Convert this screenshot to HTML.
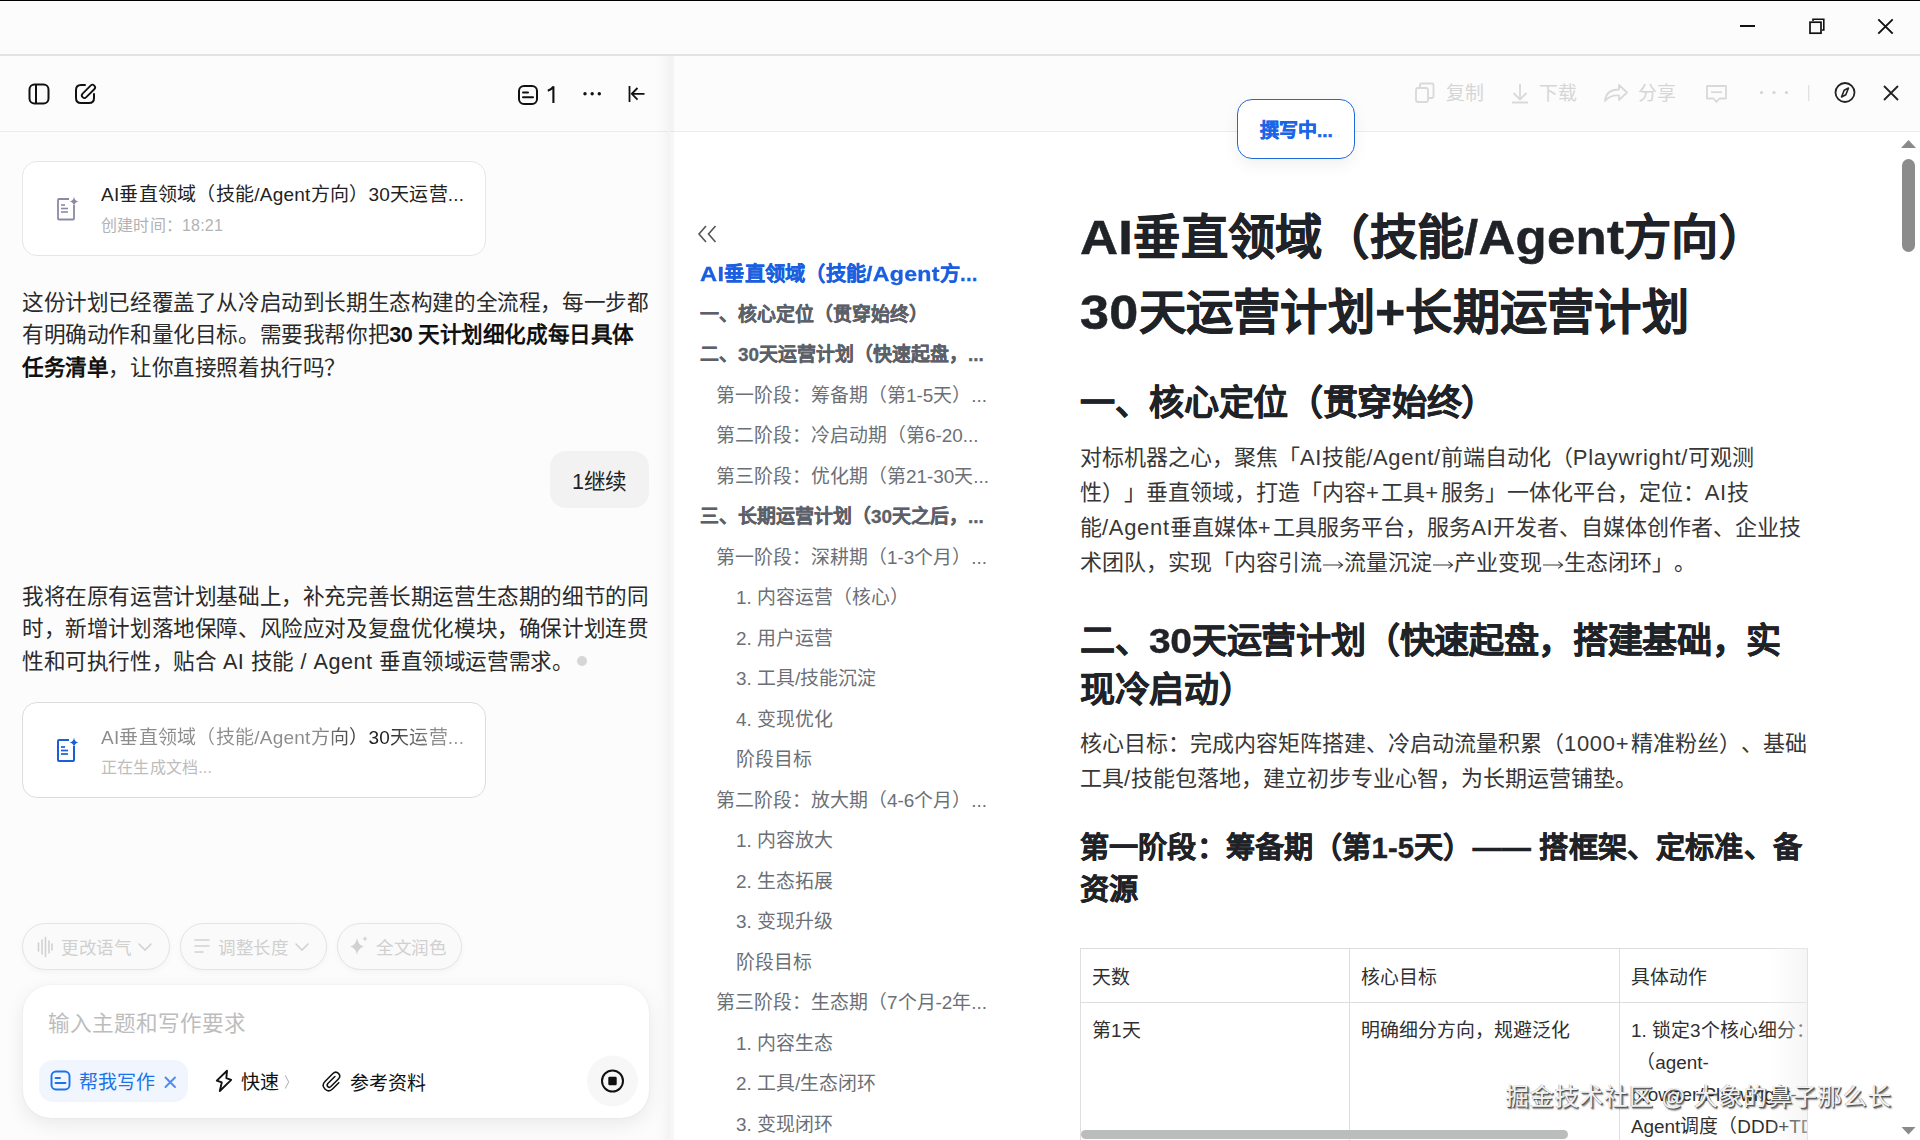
<!DOCTYPE html>
<html lang="zh-CN">
<head>
<meta charset="utf-8">
<style>
*{box-sizing:border-box;margin:0;padding:0}
html,body{width:1920px;height:1140px;overflow:hidden}
body{position:relative;text-spacing-trim:space-all;background:#fcfcfc;font-family:"Liberation Sans",sans-serif;color:#262626}
.a{position:absolute}
.nw{white-space:nowrap}
svg{position:absolute;overflow:visible}
#topline{left:0;top:0;width:1920px;height:1px;background:#000}
#titlebar{left:0;top:1px;width:1920px;height:53px;background:#fcfcfc}
#tb-border{left:0;top:54px;width:1920px;height:2px;background:#e3e3e3}
#left{left:0;top:56px;width:668px;height:1084px;background:#fcfcfc}
#left-hb{left:0;top:131px;width:668px;height:1px;background:#ececec}
#shadow{left:654px;top:56px;width:20px;height:1084px;background:linear-gradient(90deg,rgba(0,0,0,0) 0%,rgba(0,0,0,0.012) 40%,rgba(0,0,0,0.035) 80%,rgba(0,0,0,0.03) 100%)}
#right{left:670px;top:56px;width:1250px;height:1084px;background:#fff}
#right-head{left:670px;top:56px;width:1250px;height:75px;background:#fcfcfc}
#right-hb{left:670px;top:131px;width:1250px;height:1px;background:#ececec}
.msg{font-size:21.6px;line-height:32.4px;color:#2a2a2a;letter-spacing:-0.4px}
.card{border:1px solid #e6e6e6;border-radius:15px;background:#fff}
.ol{font-size:18.9px;line-height:40.5px;color:#6b6f76;white-space:nowrap}
.ol b{color:#5c6068}
.h1{font-size:47.25px;letter-spacing:0.25px;line-height:75px;font-weight:bold;color:#1f2226;white-space:nowrap;-webkit-text-stroke:0.5px #1f2226}
.h1 .L{letter-spacing:3px}
.h2 .L{letter-spacing:1.8px}
.sx{display:inline-block}
svg.arr{position:static;display:inline-block;vertical-align:middle;transform:translateY(1px)}
.sx>span{display:inline-block;transform-origin:0 0}
.h1 .L2{letter-spacing:2.2px}
.h2{font-size:35.1px;letter-spacing:-0.35px;line-height:49px;font-weight:bold;color:#1f2226;white-space:nowrap;-webkit-text-stroke:0.4px #1f2226}
.h3{font-size:29.16px;letter-spacing:0.16px;line-height:42.5px;font-weight:bold;color:#1f2226;white-space:nowrap;-webkit-text-stroke:0.4px #1f2226}
.p{font-size:22px;line-height:35.1px;color:#373737;white-space:nowrap}
.p i{font-style:normal;letter-spacing:0.7px}
.msg i{font-style:normal;letter-spacing:0.5px}
.p u{text-decoration:none;letter-spacing:2.5px}
.chip{border:1px solid #e4e4e4;border-radius:24px;background:#fafafa;box-shadow:0 2px 6px rgba(0,0,0,0.04)}
.chipt{font-size:17.55px;letter-spacing:-0.45px;color:#d0d0d0;white-space:nowrap}
.tb{font-size:18.9px;color:#d6d6d6;white-space:nowrap}
.td{font-size:18.9px;color:#2f2f2f;white-space:nowrap;line-height:32px}
</style>
</head>
<body>
<div id="topline" class="a"></div>
<div id="titlebar" class="a"></div>
<div id="tb-border" class="a"></div>

<!-- window controls -->
<svg style="left:1730px;top:10px" width="190" height="34" viewBox="1730 10 190 34">
  <line x1="1740" y1="26" x2="1755" y2="26" stroke="#111" stroke-width="2"/>
  <rect x="1810" y="22.2" width="11" height="11" fill="none" stroke="#111" stroke-width="1.7"/>
  <path d="M1813 21 V19.2 H1823.8 V30 H1822" fill="none" stroke="#111" stroke-width="1.6"/>
  <path d="M1878.3 19.3 L1892.7 33.7 M1892.7 19.3 L1878.3 33.7" stroke="#111" stroke-width="1.9"/>
</svg>

<div id="left" class="a"></div>
<div id="right" class="a"></div>
<div id="right-head" class="a"></div>
<div id="left-hb" class="a"></div>
<div id="right-hb" class="a"></div>
<div id="shadow" class="a"></div>

<!-- LEFT HEADER ICONS -->
<svg style="left:0;top:56px" width="668" height="75" viewBox="0 56 668 75">
  <!-- sidebar -->
  <rect x="29.5" y="84.5" width="19" height="19" rx="5" fill="none" stroke="#111" stroke-width="2"/>
  <line x1="36" y1="85" x2="36" y2="103" stroke="#111" stroke-width="2"/>
  <!-- edit -->
  <path d="M85 85 H81 Q76 85 76 90 V98 Q76 103 81 103 H89 Q94 103 94 98 V94" fill="none" stroke="#111" stroke-width="2" stroke-linecap="round"/>
  <rect x="80.2" y="88.8" width="16.5" height="5.2" rx="2.6" transform="rotate(-45 88.45 91.4)" fill="none" stroke="#111" stroke-width="1.8"/>
  <!-- doc count icon -->
  <rect x="519" y="86" width="18" height="18" rx="5" fill="none" stroke="#111" stroke-width="2"/>
  <line x1="523" y1="92.5" x2="528" y2="92.5" stroke="#111" stroke-width="2" stroke-linecap="round"/>
  <line x1="523" y1="97.2" x2="533" y2="97.2" stroke="#111" stroke-width="2" stroke-linecap="round"/>
  <!-- dots -->
  <circle cx="585" cy="93.8" r="1.7" fill="#111"/>
  <circle cx="592.2" cy="93.8" r="1.7" fill="#111"/>
  <circle cx="599.3" cy="93.8" r="1.7" fill="#111"/>
  <!-- collapse -->
  <line x1="629.5" y1="86" x2="629.5" y2="102" stroke="#111" stroke-width="1.8"/>
  <path d="M644.5 93.8 H632.5 M637.5 88 L631.8 93.8 L637.5 99.6" fill="none" stroke="#111" stroke-width="1.8"/>
</svg>
<svg style="left:540px;top:80px" width="20" height="30" viewBox="540 80 20 30"><path d="M553.4 86.2 V103 M553.4 86.5 Q551.5 89.6 547.8 90.8" fill="none" stroke="#111" stroke-width="2.1"/></svg>

<!-- CARD 1 -->
<div class="a card" style="left:22px;top:161px;width:464px;height:95px"></div>
<svg style="left:50px;top:190px" width="40" height="40" viewBox="50 190 40 40">
  <path d="M74 205 V218.5 Q74 219.5 73 219.5 H59 Q58 219.5 58 218.5 V200 Q58 199 59 199 H69" fill="none" stroke="#8a8aa6" stroke-width="1.8"/>
  <line x1="61" y1="205" x2="65" y2="205" stroke="#8a8aa6" stroke-width="1.6"/>
  <line x1="61" y1="208.5" x2="68" y2="208.5" stroke="#8a8aa6" stroke-width="1.6"/>
  <line x1="61" y1="212" x2="68" y2="212" stroke="#8a8aa6" stroke-width="1.6"/>
  <path d="M74 196.5 Q74.5 200.8 78.5 201.5 Q74.5 202.2 74 206.5 Q73.5 202.2 69.5 201.5 Q73.5 200.8 74 196.5Z" fill="#8a8aa6"/>
</svg>
<div class="a nw" style="left:101px;top:181px;font-size:19px;line-height:28px;color:#222;letter-spacing:0.25px">AI垂直领域（技能/Agent方向）30天运营...</div>
<div class="a nw" style="left:101px;top:215px;font-size:16px;line-height:22px;color:#b3b3b3;letter-spacing:0.2px">创建时间：18:21</div>

<!-- MESSAGE 1 -->
<div class="a msg nw" style="left:22px;top:287px">这份计划已经覆盖了从冷启动到长期生态构建的全流程，每一步都<br>有明确动作和量化目标。需要我帮你把<b style="color:#111">30 天计划细化成每日具体</b><br><b style="color:#111">任务清单</b>，让你直接照着执行吗？</div>

<!-- USER BUBBLE -->
<div class="a" style="left:550px;top:451px;width:99px;height:57px;border-radius:16px;background:#f2f2f2"></div>
<div class="a nw" style="left:572px;top:466px;font-size:21.6px;line-height:32px;color:#222;letter-spacing:-0.4px">1继续</div>

<!-- MESSAGE 2 -->
<div class="a msg nw" style="left:22px;top:581px">我将在原有运营计划基础上，补充完善长期运营生态期的细节的同<br>时，新增计划落地保障、风险应对及复盘优化模块，确保计划连贯<br>性和可执行性，贴合<i> AI </i>技能<i> / Agent </i>垂直领域运营需求。</div>
<div class="a" style="left:577px;top:656px;width:10px;height:10px;border-radius:50%;background:#d6d6d6"></div>

<!-- CARD 2 -->
<div class="a card" style="left:22px;top:702px;width:464px;height:96px;border-color:#dcdcdc"></div>
<svg style="left:50px;top:730px" width="40" height="40" viewBox="50 730 40 40">
  <path d="M74 746 V760 Q74 761 73 761 H59 Q58 761 58 760 V741 Q58 740 59 740 H69" fill="none" stroke="#1a5fd6" stroke-width="2"/>
  <line x1="61" y1="747" x2="65" y2="747" stroke="#1a5fd6" stroke-width="1.7"/>
  <line x1="61" y1="750.5" x2="68" y2="750.5" stroke="#1a5fd6" stroke-width="1.7"/>
  <line x1="61" y1="754" x2="68" y2="754" stroke="#1a5fd6" stroke-width="1.7"/>
  <path d="M74 737.5 Q74.5 741.8 78.5 742.5 Q74.5 743.2 74 747.5 Q73.5 743.2 69.5 742.5 Q73.5 741.8 74 737.5Z" fill="#1a5fd6"/>
</svg>
<div class="a nw" style="left:101px;top:724px;font-size:19px;letter-spacing:0.25px;line-height:28px;background:linear-gradient(90deg,#8c8c8c 0%,#8c8c8c 60%,#222 73%,#1a1a1a 78%,#555 84%,#8c8c8c 92%,#999 100%);-webkit-background-clip:text;background-clip:text;color:transparent">AI垂直领域（技能/Agent方向）30天运营...</div>
<div class="a nw" style="left:101px;top:757px;font-size:16px;line-height:22px;color:#bdbdbd;letter-spacing:0.2px">正在生成文档...</div>

<!-- CHIPS -->
<div class="a chip" style="left:22px;top:923px;width:148px;height:47px"></div>
<div class="a chip" style="left:180px;top:923px;width:147px;height:47px"></div>
<div class="a chip" style="left:337px;top:923px;width:125px;height:47px"></div>
<svg style="left:30px;top:930px" width="440" height="36" viewBox="30 930 440 36">
  <g stroke="#d2d2d2" stroke-width="1.6" stroke-linecap="round" fill="none">
    <line x1="38.5" y1="943" x2="38.5" y2="951"/>
    <line x1="42" y1="940" x2="42" y2="954"/>
    <line x1="45.5" y1="937.5" x2="45.5" y2="956.5"/>
    <line x1="49" y1="941" x2="49" y2="953"/>
    <line x1="52" y1="944" x2="52" y2="950"/>
    <path d="M139 944 L145 950 L151 944"/>
    <line x1="195" y1="940" x2="209" y2="940"/>
    <line x1="195" y1="946" x2="209" y2="946"/>
    <line x1="195" y1="952" x2="203" y2="952"/>
    <path d="M296 944 L302 950 L308 944"/>
  </g>
  <path d="M357 938 Q358 945 364 946.5 Q358 948 357 955 Q356 948 350 946.5 Q356 945 357 938Z" fill="#d2d2d2"/>
  <path d="M365 936 Q365.4 938.4 367.5 938.8 Q365.4 939.2 365 941.6 Q364.6 939.2 362.5 938.8 Q364.6 938.4 365 936Z" fill="#d2d2d2"/>
</svg>
<div class="a chipt" style="left:61px;top:934px;line-height:28px">更改语气</div>
<div class="a chipt" style="left:218px;top:934px;line-height:28px">调整长度</div>
<div class="a chipt" style="left:376px;top:934px;line-height:28px">全文润色</div>

<!-- INPUT BOX -->
<div class="a" style="left:23px;top:985px;width:626px;height:133px;border-radius:28px;background:#fff;box-shadow:0 6px 20px rgba(0,0,0,0.08),0 0 3px rgba(0,0,0,0.05)"></div>
<div class="a nw" style="left:48px;top:1008.5px;font-size:21.6px;line-height:30px;color:#bdbdbd">输入主题和写作要求</div>
<div class="a" style="left:39px;top:1060px;width:149px;height:42px;border-radius:14px;background:#f0f5fe"></div>
<svg style="left:40px;top:1060px" width="600" height="42" viewBox="40 1060 600 42">
  <rect x="51.5" y="1071.5" width="18" height="18" rx="4.5" fill="none" stroke="#1a73e8" stroke-width="1.9"/>
  <line x1="55.5" y1="1078" x2="60" y2="1078" stroke="#1a73e8" stroke-width="1.9" stroke-linecap="round"/>
  <line x1="55.5" y1="1083" x2="65.5" y2="1083" stroke="#1a73e8" stroke-width="1.9" stroke-linecap="round"/>
  <path d="M165.5 1077.5 L175 1087 M175 1077.5 L165.5 1087" stroke="#4d8bf0" stroke-width="1.9" stroke-linecap="round"/>
  <path d="M227 1070.8 L216.8 1080.6 L221.8 1082.4 L219.8 1091 L231.2 1079.9 L226.3 1078.2 Z" fill="none" stroke="#111" stroke-width="1.9" stroke-linejoin="round"/>
  <path d="M285.2 1075.2 L288.7 1082 L285.2 1088.6" fill="none" stroke="#bbb" stroke-width="1.1"/>
  <g transform="translate(331.3 1080.8) scale(0.86) translate(-331.3 -1081.5)"><path d="M335.5 1076.5 L327.3 1084.7 Q325.6 1086.6 327.3 1088.3 Q329 1089.9 330.8 1088.2 L339.6 1079.4 Q342.8 1076.1 339.6 1072.9 Q336.4 1069.8 333.2 1073 L324.2 1082 Q319.5 1086.8 323.9 1091.1 Q328.2 1095.4 333 1090.7 L340 1083.7" fill="none" stroke="#111" stroke-width="1.8" stroke-linecap="round"/></g>
  <circle cx="612.5" cy="1081" r="25.5" fill="#f7f7f7"/>
  <circle cx="612.5" cy="1081" r="10.5" fill="none" stroke="#111" stroke-width="2"/>
  <rect x="608.3" y="1076.8" width="8.4" height="8.4" rx="1.2" fill="#111"/>
</svg>
<div class="a nw" style="left:79px;top:1069px;font-size:19px;line-height:28px;color:#1a73e8">帮我写作</div>
<div class="a nw" style="left:241px;top:1069px;font-size:19px;line-height:28px;color:#111">快速</div>
<div class="a nw" style="left:350px;top:1069.5px;font-size:19px;line-height:28px;color:#111">参考资料</div>

<!-- RIGHT TOOLBAR -->
<svg style="left:1400px;top:70px" width="520" height="45" viewBox="1400 70 520 45">
  <g fill="none" stroke="#d9d9d9" stroke-width="1.8" stroke-linejoin="round">
    <rect x="1416" y="88" width="12" height="14" rx="2"/>
    <path d="M1420 88 V85 Q1420 83.5 1421.5 83.5 H1432 Q1433.5 83.5 1433.5 85 V96.5 Q1433.5 98 1432 98 H1428"/>
    <path d="M1520 84 V99 M1513.5 93 L1520 99.5 L1526.5 93 M1512 102.5 H1528"/>
    <path d="M1605 101 Q1606 89.5 1619 89.5 V85 L1627 92.5 L1619 100 V95.5 Q1610 95 1605 101Z"/>
    <path d="M1707 86 H1726 V98.5 H1719.5 L1716.5 101.8 L1713.5 98.5 H1707 Z"/>
    <line x1="1711" y1="92.2" x2="1722" y2="92.2"/>
  </g>
  <circle cx="1761.5" cy="92.5" r="1.6" fill="#d4d4d4"/>
  <circle cx="1774" cy="92.5" r="1.6" fill="#d4d4d4"/>
  <circle cx="1786.5" cy="92.5" r="1.6" fill="#d4d4d4"/>
  <line x1="1808.7" y1="85" x2="1808.7" y2="101" stroke="#dedede" stroke-width="1.2"/>
  <circle cx="1845" cy="92.5" r="9.5" fill="none" stroke="#222" stroke-width="1.8"/>
  <path d="M1848.5 88 L1845.8 94.8 L1841.5 97 L1844.2 90.2 Z" fill="none" stroke="#222" stroke-width="1.6" stroke-linejoin="round"/>
  <path d="M1884 86 L1898 100 M1898 86 L1884 100" stroke="#222" stroke-width="1.8"/>
</svg>
<div class="a tb" style="left:1446px;top:80px;line-height:28px">复制</div>
<div class="a tb" style="left:1539px;top:80px;line-height:28px">下载</div>
<div class="a tb" style="left:1638px;top:80px;line-height:28px">分享</div>

<!-- WRITING BUTTON -->
<div class="a" style="left:1237px;top:99px;width:118px;height:60px;border:1.5px solid #2069d8;border-radius:15px;background:#fff;box-shadow:0 6px 16px rgba(0,0,0,0.06)"></div>
<div class="a nw" style="left:1260px;top:117px;font-size:19px;line-height:28px;font-weight:bold;color:#1a66e6;-webkit-text-stroke:0.5px #1a66e6">撰写中...</div>

<!-- OUTLINE -->
<svg style="left:690px;top:220px" width="40" height="30" viewBox="690 220 40 30">
  <path d="M706 226 L699 234 L706 242 M715.5 226 L708.5 234 L715.5 242" fill="none" stroke="#555" stroke-width="1.6"/>
</svg>
<div class="a ol" style="left:700px;top:254px">
<div style="color:#1a5fe0;font-weight:bold;font-size:20.25px;letter-spacing:0.25px;-webkit-text-stroke:0.3px #1a5fe0"><span class="sx" style="width:24.25px"><span style="transform:scaleX(1.169)">AI</span></span>垂直领域（技能<span class="sx" style="width:73.8px"><span style="transform:scaleX(1.144)">/Agent</span></span>方...</div>
<div style="font-weight:bold;color:#5c6068;-webkit-text-stroke:0.3px #5c6068">一、核心定位（贯穿始终）</div>
<div style="font-weight:bold;color:#5c6068;-webkit-text-stroke:0.3px #5c6068">二、30天运营计划（快速起盘，...</div>
<div style="padding-left:16px">第一阶段：筹备期（第1-5天）...</div>
<div style="padding-left:16px">第二阶段：冷启动期（第6-20...</div>
<div style="padding-left:16px">第三阶段：优化期（第21-30天...</div>
<div style="font-weight:bold;color:#5c6068;-webkit-text-stroke:0.3px #5c6068">三、长期运营计划（30天之后，...</div>
<div style="padding-left:16px">第一阶段：深耕期（1-3个月）...</div>
<div style="padding-left:36px">1. 内容运营（核心）</div>
<div style="padding-left:36px">2. 用户运营</div>
<div style="padding-left:36px">3. 工具/技能沉淀</div>
<div style="padding-left:36px">4. 变现优化</div>
<div style="padding-left:36px">阶段目标</div>
<div style="padding-left:16px">第二阶段：放大期（4-6个月）...</div>
<div style="padding-left:36px">1. 内容放大</div>
<div style="padding-left:36px">2. 生态拓展</div>
<div style="padding-left:36px">3. 变现升级</div>
<div style="padding-left:36px">阶段目标</div>
<div style="padding-left:16px">第三阶段：生态期（7个月-2年...</div>
<div style="padding-left:36px">1. 内容生态</div>
<div style="padding-left:36px">2. 工具/生态闭环</div>
<div style="padding-left:36px">3. 变现闭环</div>
</div>

<!-- DOC -->
<div class="a h1" style="left:1080px;top:199.5px"><span class="sx" style="width:53.25px"><span style="transform:scaleX(1.115)">AI</span></span>垂直领域（技能<span class="sx" style="width:160.2px"><span style="transform:scaleX(1.079)">/Agent</span></span>方向）<br><span class="sx" style="width:58.56px"><span style="transform:scaleX(1.104)">30</span></span>天运营计划<span class="sx" style="width:30.59px"><span style="transform:scaleX(1.099)">+</span></span>长期运营计划</div>
<div class="a h2" style="left:1080px;top:378px">一、核心定位（贯穿始终）</div>
<div class="a p" style="left:1080px;top:439.5px">对标机器之心，聚焦「<i>AI</i>技能<i>/Agent/</i>前端自动化（<i>Playwright/</i>可观测<br>性）」垂直领域，打造「内容<u>+</u>工具<u>+</u>服务」一体化平台，定位：<i>AI</i>技<br>能<i>/Agent</i>垂直媒体<u>+</u>工具服务平台，服务<i>AI</i>开发者、自媒体创作者、企业技<br>术团队，实现「内容引流<svg class="arr" width="22" height="10" viewBox="0 0 22 10"><path d="M1 5 H20.5 M16.3 1.6 L20.6 5 L16.3 8.4" fill="none" stroke="#3a3a3a" stroke-width="1.15"/></svg>流量沉淀<svg class="arr" width="22" height="10" viewBox="0 0 22 10"><path d="M1 5 H20.5 M16.3 1.6 L20.6 5 L16.3 8.4" fill="none" stroke="#3a3a3a" stroke-width="1.15"/></svg>产业变现<svg class="arr" width="22" height="10" viewBox="0 0 22 10"><path d="M1 5 H20.5 M16.3 1.6 L20.6 5 L16.3 8.4" fill="none" stroke="#3a3a3a" stroke-width="1.15"/></svg>生态闭环」。</div>
<div class="a h2" style="left:1080px;top:616px">二、<span class="sx" style="width:42.63px"><span style="transform:scaleX(1.112)">30</span></span>天运营计划（快速起盘，搭建基础，实<br>现冷启动）</div>
<div class="a p" style="left:1080px;top:726px">核心目标：完成内容矩阵搭建、冷启动流量积累（<i>1000</i><u>+</u>精准粉丝）、基础<br>工具<i>/</i>技能包落地，建立初步专业心智，为长期运营铺垫。</div>
<div class="a h3" style="left:1080px;top:826.5px">第一阶段：筹备期（第1-5天）—— 搭框架、定标准、备<br>资源</div>

<!-- TABLE -->
<div class="a" style="left:1080px;top:948px;width:728px;height:192px;overflow:hidden">
  <div class="a" style="left:0;top:0;width:800px;height:300px;border-top:1px solid #dedede;border-left:1px solid #dedede"></div>
  <div class="a" style="left:0;top:54px;width:800px;height:1px;background:#dedede"></div>
  <div class="a" style="left:269px;top:0;width:1px;height:300px;background:#dedede"></div>
  <div class="a" style="left:539px;top:0;width:1px;height:300px;background:#dedede"></div>
  <div class="a td" style="left:12px;top:14px">天数</div>
  <div class="a td" style="left:281px;top:14px">核心目标</div>
  <div class="a td" style="left:551px;top:14px">具体动作</div>
  <div class="a td" style="left:12px;top:66.5px">第1天</div>
  <div class="a td" style="left:281px;top:66.5px">明确细分方向，规避泛化</div>
  <div class="a td" style="left:551px;top:66.5px">1. 锁定3个核心细分：<br>&nbsp;（agent-<br>browser/Playwright-<br>Agent调度（DDD+TDD</div>
  <div class="a" style="left:690px;top:0;width:37px;height:192px;background:linear-gradient(90deg,rgba(255,255,255,0),rgba(238,238,238,0.55))"></div>
  <div class="a" style="left:727px;top:0;width:1px;height:192px;background:#e2e2e2"></div>
</div>
<div class="a" style="left:1081px;top:1130px;width:487px;height:9px;border-radius:5px;background:#bbbdbd"></div>

<!-- V SCROLLBAR -->
<svg style="left:1895px;top:135px" width="25" height="1005" viewBox="1895 135 25 1005">
  <path d="M1901 148 L1908.5 140 L1916 148 Z" fill="#8a8a8a"/>
  <path d="M1901.5 1127 L1908.5 1134.5 L1915.5 1127 Z" fill="#8a8a8a"/>
</svg>
<div class="a" style="left:1902px;top:159px;width:13px;height:93px;border-radius:6.5px;background:#8c8c8c"></div>

<!-- WATERMARK -->
<div class="a nw" style="left:1505px;top:1081px;font-size:24px;line-height:32px;color:#f2f2f2;letter-spacing:0.8px;text-shadow:1px 1px 0 #555,1.5px 1.5px 1.5px rgba(0,0,0,0.55),-0.5px -0.5px 0 rgba(0,0,0,0.25)">掘金技术社区 @ 大象的鼻子那么长</div>
</body>
</html>
